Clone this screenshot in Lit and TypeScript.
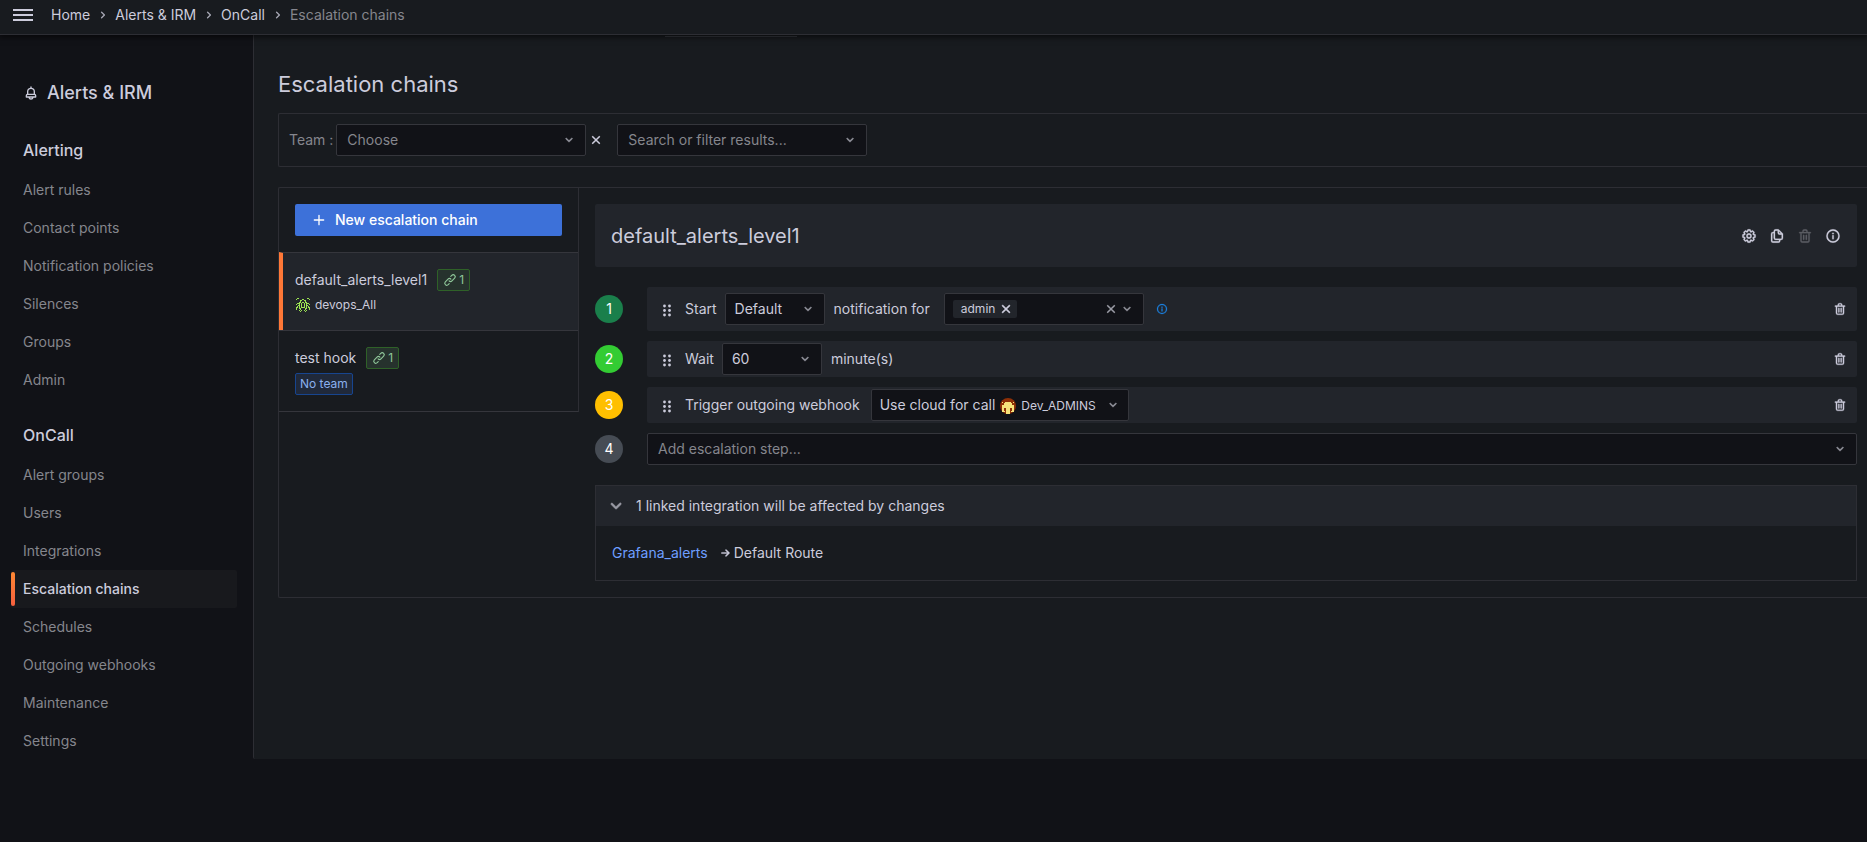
import { LitElement, html, css, svg, nothing } from "lit";
import { customElement, property } from "lit/decorators.js";
import { classMap } from "lit/directives/class-map.js";

const ICONS: Record<string, string> = {
  bell: "M18 13.2V10a6 6 0 0 0-5-5.9V3a1 1 0 0 0-2 0v1.1A6 6 0 0 0 6 10v3.2A3 3 0 0 0 4 16v2a1 1 0 0 0 1 1h3.1a4 4 0 0 0 7.8 0H19a1 1 0 0 0 1-1v-2a3 3 0 0 0-2-2.8zM8 10a4 4 0 0 1 8 0v3H8zm4 10a2 2 0 0 1-1.7-1h3.4a2 2 0 0 1-1.7 1zm6-3H6v-1a1 1 0 0 1 1-1h10a1 1 0 0 1 1 1z",
  down: "M17 9.2a1 1 0 0 0-1.4 0L12 12.7 8.5 9.2a1 1 0 0 0-1.4 1.4l4.2 4.2a1 1 0 0 0 1.4 0l4.3-4.2a1 1 0 0 0 0-1.4z",
  right: "M14.83 11.29 10.59 7.05a1 1 0 0 0-1.42 1.41L12.71 12l-3.54 3.54a1 1 0 1 0 1.42 1.41l4.24-4.24a1 1 0 0 0 0-1.42z",
  times: "M13.41 12l4.3-4.29a1 1 0 1 0-1.42-1.42L12 10.59l-4.29-4.3a1 1 0 0 0-1.42 1.42l4.3 4.29-4.3 4.29a1 1 0 1 0 1.42 1.42l4.29-4.3 4.29 4.3a1 1 0 1 0 1.42-1.42z",
  plus: "M19 11h-6V5a1 1 0 0 0-2 0v6H5a1 1 0 0 0 0 2h6v6a1 1 0 0 0 2 0v-6h6a1 1 0 0 0 0-2z",
  link: "M10 17.55l-1.77 1.72a2.47 2.47 0 0 1-3.5-3.5l4.54-4.55a2.46 2.46 0 0 1 3.39-.09l.12.1a1 1 0 0 0 1.4-1.43 2.75 2.75 0 0 0-.18-.21 4.46 4.46 0 0 0-6.09.22l-4.6 4.55a4.48 4.48 0 0 0 6.33 6.33L11.37 19A1 1 0 0 0 10 17.55zM20.69 3.31a4.49 4.49 0 0 0-6.33 0L12.63 5A1 1 0 0 0 14 6.45l1.73-1.72a2.47 2.47 0 0 1 3.5 3.5l-4.54 4.55a2.46 2.46 0 0 1-3.39.09l-.12-.1a1 1 0 0 0-1.4 1.43 2.75 2.75 0 0 0 .23.21 4.47 4.47 0 0 0 6.09-.22l4.55-4.55a4.49 4.49 0 0 0 .04-6.33z",
  trash: "M10 18a1 1 0 0 0 1-1v-6a1 1 0 0 0-2 0v6a1 1 0 0 0 1 1zM20 6h-4V5a3 3 0 0 0-3-3h-2a3 3 0 0 0-3 3v1H4a1 1 0 0 0 0 2h1v11a3 3 0 0 0 3 3h8a3 3 0 0 0 3-3V8h1a1 1 0 0 0 0-2zM10 5a1 1 0 0 1 1-1h2a1 1 0 0 1 1 1v1h-4zm7 14a1 1 0 0 1-1 1H8a1 1 0 0 1-1-1V8h10zm-3-1a1 1 0 0 0 1-1v-6a1 1 0 0 0-2 0v6a1 1 0 0 0 1 1z",
  info: "M12 2a10 10 0 1 0 10 10A10 10 0 0 0 12 2zm0 18a8 8 0 1 1 8-8 8 8 0 0 1-8 8zm0-9.5a1 1 0 0 0-1 1V16a1 1 0 0 0 2 0v-4.500a1 1 0 0 0-1-1zM12 7a1.25 1.25 0 1 0 1.25 1.25A1.25 1.25 0 0 0 12 7z",
  copy: "M21 8.94a1.31 1.31 0 0 0-.06-.27v-.09a1.07 1.07 0 0 0-.19-.28l-6-6a1.07 1.07 0 0 0-.28-.19.32.32 0 0 0-.09 0A.88.88 0 0 0 14.05 2H10a3 3 0 0 0-3 3v1H6a3 3 0 0 0-3 3v10a3 3 0 0 0 3 3h8a3 3 0 0 0 3-3v-1h1a3 3 0 0 0 3-3V8.94zM15 5.41 17.59 8H16a1 1 0 0 1-1-1zM15 19a1 1 0 0 1-1 1H6a1 1 0 0 1-1-1V9a1 1 0 0 1 1-1h1v7a3 3 0 0 0 3 3h5zm4-4a1 1 0 0 1-1 1h-8a1 1 0 0 1-1-1V5a1 1 0 0 1 1-1h3v3a3 3 0 0 0 3 3h3z",
  arrow: "M17.92 11.62a1 1 0 0 0-.21-.33l-5-5a1 1 0 0 0-1.42 1.42l3.3 3.29H5a1 1 0 0 0 0 2h9.590l-3.3 3.29a1 1 0 1 0 1.42 1.42l5-5a1 1 0 0 0 .21-1.09z",
  cog: "M21.32 9.55l-1.89-.63.89-1.78A1 1 0 0 0 20.13 6L18 3.87a1 1 0 0 0-1.15-.19l-1.78.89-.63-1.89A1 1 0 0 0 13.5 2h-3a1 1 0 0 0-.95.68l-.63 1.89-1.78-.89A1 1 0 0 0 6 3.87L3.87 6a1 1 0 0 0-.19 1.15l.89 1.78-1.89.63a1 1 0 0 0-.68.94v3a1 1 0 0 0 .68.95l1.89.63-.89 1.78A1 1 0 0 0 3.87 18L6 20.13a1 1 0 0 0 1.15.19l1.78-.89.63 1.89a1 1 0 0 0 .95.68h3a1 1 0 0 0 .95-.68l.63-1.89 1.78.89a1 1 0 0 0 1.13-.19L20.13 18a1 1 0 0 0 .19-1.15l-.89-1.78 1.89-.63a1 1 0 0 0 .68-.94v-3a1 1 0 0 0-.68-.95zM20 12.78l-1.2.4A2 2 0 0 0 17.64 16l.57 1.14-1.1 1.1L16 17.64a2 2 0 0 0-2.79 1.16l-.4 1.2h-1.59l-.4-1.2A2 2 0 0 0 8 17.64l-1.14.57-1.1-1.1L6.36 16a2 2 0 0 0-1.16-2.79L4 12.78v-1.56l1.2-.4A2 2 0 0 0 6.36 8l-.57-1.11 1.1-1.1L8 6.36a2 2 0 0 0 2.79-1.16l.4-1.2h1.59l.4 1.2A2 2 0 0 0 16 6.36l1.14-.57 1.1 1.1L17.64 8a2 2 0 0 0 1.16 2.79l1.2.4zM12 8a4 4 0 1 0 4 4 4 4 0 0 0-4-4zm0 6a2 2 0 1 1 2-2 2 2 0 0 1-2 2z",
};

const icon = (name: string, size = 16, weight = 0) => html`
  <svg width=${size} height=${size} viewBox="0 0 24 24" fill="currentColor" stroke="currentColor"
    stroke-width=${weight} aria-hidden="true">
    <path d=${ICONS[name]}></path>
  </svg>`;

const grip = html`
  <svg width="8" height="13" viewBox="0 0 8 13" fill="currentColor" aria-hidden="true">
    ${[2, 6.5, 11].map((y) => svg`<circle cx="1.5" cy=${y} r="1.4"></circle><circle cx="6.5" cy=${y} r="1.4"></circle>`)}
  </svg>`;

// Pixel rows of the generated team avatar; each mark is one filled cell.
const DEVOPS = [
  ".##........##.",
  "#.....##.....#",
  "....##..##....",
  "....#....#....",
  "...##.##.##...",
  ".###.#..#.###.",
  "#..#.#..#.#..#",
  "..##.#..#.##..",
  ".#.#.#..#.#.#.",
  "##.#.####.#.##",
  "#..##....##..#",
  "#...#....#...#",
  "...#.#..#.#...",
  "....#....#....",
];

const devopsAvatar = html`
  <svg width="14" height="14" viewBox="0 0 14 14" aria-hidden="true" shape-rendering="crispEdges">
    ${DEVOPS.flatMap((row, y) =>
      [...row].map((c, x) => (c === "#" ? svg`<rect x=${x} y=${y} width="1" height="1" fill="#9be352"></rect>` : nothing)),
    )}
  </svg>`;

const adminsAvatar = html`
  <svg width="16" height="16" viewBox="0 0 16 16" aria-hidden="true">
    <circle cx="8" cy="8" r="8" fill="#8f2f06"></circle>
    <path d="M5 4h6v1h1v2h2v7h-3v-1h1v-3h-2v6H6v-6H4v3h1v1H2V7h2V5h1z" fill="#f7e37a"></path>
    <path d="M2 4h1v1H2zM13 4h1v1h-1z" fill="#f7e37a"></path>
  </svg>`;

const base = css`
  * { box-sizing: border-box; }
  svg { display: block; flex: none; }
  a { color: inherit; text-decoration: none; }
  button, select, input { font: inherit; color: inherit; margin: 0; }
  button { background: none; border: 0; padding: 0; display: flex; align-items: center; cursor: pointer; }
`;

@customElement("select-box")
class SelectBox extends LitElement {
  @property() label = "";
  @property() value = "";
  @property({ type: Boolean }) placeholder = false;

  static styles = [base, css`
    :host { display: grid; align-items: center; color: #ccccdc; }
    select, .chevron { grid-area: 1 / 1; }
    select {
      appearance: none; width: 100%; height: 32px; padding: 0 28px 0 9px; border: 1px solid #35363c;
      border-radius: 2px; background: #111217;
    }
    .placeholder { color: #85868d; padding-left: 10px; }
    .chevron { justify-self: end; margin-right: 9px; color: #9a9ba5; pointer-events: none; }
  `];

  render() {
    return html`
      <select class=${classMap({ placeholder: this.placeholder })} aria-label=${this.label}>
        <option>${this.value}</option>
      </select>
      <span class="chevron">${icon("down", 16, 0.5)}</span>`;
  }
}

@customElement("side-nav")
class SideNav extends LitElement {
  static styles = [base, css`
    :host { display: block; padding: 35px 16px 0 11px; color: #85868d; }
    .title { display: flex; align-items: center; gap: 8px; margin: 0; padding: 9px 12px 7px;
      font-size: 18px; line-height: 28px; font-weight: 500; color: #ccccdc; }
    h3 { margin: 0; padding: 0 12px; font-size: 16px; line-height: 22px; font-weight: 500; color: #ccccdc; }
    section { padding-top: 25px; }
    ul { list-style: none; margin: 0; padding: 10px 0 0; }
    li a { display: flex; align-items: center; height: 38px; padding: 0 12px; }
    .active { display: grid; grid-template-columns: 4px 1fr; align-items: center; padding: 0;
      background: #18191d; border-radius: 2px; color: #ccccdc; font-weight: 500; }
    .active::before { content: ""; height: 34px; border-radius: 2px; background: linear-gradient(#ff8833, #f55f3e); }
    .active span { padding-left: 8px; }
  `];

  section(title: string, items: string[]) {
    return html`
      <section>
        <h3>${title}</h3>
        <ul>
          ${items.map((t) => html`<li>
            <a href="#" class=${classMap({ active: t === "Escalation chains" })}><span>${t}</span></a>
          </li>`)}
        </ul>
      </section>`;
  }

  render() {
    return html`
      <h2 class="title">${icon("bell")}Alerts &amp; IRM</h2>
      ${this.section("Alerting", ["Alert rules", "Contact points", "Notification policies", "Silences", "Groups", "Admin"])}
      ${this.section("OnCall", ["Alert groups", "Users", "Integrations", "Escalation chains", "Schedules",
        "Outgoing webhooks", "Maintenance", "Settings"])}`;
  }
}

@customElement("escalation-step")
class EscalationStep extends LitElement {
  @property() number = "";
  @property() tone = "";
  @property({ type: Boolean }) roomy = false;
  @property({ type: Boolean }) blank = false;

  static styles = [base, css`
    :host { display: grid; grid-template-columns: 28px 1fr; gap: 24px; align-items: center; }
    .badge { display: grid; place-items: center; height: 28px; border-radius: 50%; color: #fff; }
    .one { background: #1a7f4b; }
    .two { background: #33cc33; }
    .three { background: #ffbf00; }
    .four { background: #464c54; }
    .row { display: flex; align-items: center; gap: 8px; padding: 2px 10px 2px 16px; border-radius: 2px; background: #22252b; }
    .roomy { padding-top: 6px; padding-bottom: 6px; }
    .grip { margin-right: 6px; padding-top: 3px; cursor: grab; }
    .remove { margin-left: auto; }
  `];

  render() {
    return html`
      <span class="badge ${this.tone}">${this.number}</span>
      ${this.blank
        ? html`<slot></slot>`
        : html`<div class=${classMap({ row: true, roomy: this.roomy })}>
            <span class="grip">${grip}</span>
            <slot></slot>
            <button class="remove" aria-label="Delete step">${icon("trash", 14, 0.5)}</button>
          </div>`}`;
  }
}

@customElement("app-root")
class AppRoot extends LitElement {
  static styles = [base, css`
    :host { display: block; min-height: 100vh; overflow: hidden; background: #111217; color: #ccccdc;
      font-family: Inter, "Liberation Sans", sans-serif; font-size: 14px; line-height: 22px; }
    .topbar { position: relative; display: flex; align-items: center; gap: 18px; height: 35px; padding: 0 13px 5px;
      background: #181b1f; border-bottom: 1px solid #2d2e34; box-shadow: 0 1px 6px 1px #000000a0; }
    .topbar::after { content: ""; position: absolute; top: 36px; left: 665px; width: 132px; height: 1px; background: #222428; }
    .burger { flex-direction: column; gap: 3px; }
    .burger i { width: 20px; height: 2px; background: #ccccdc; }
    .crumbs { display: flex; align-items: center; gap: 4px; }
    .crumbs svg { margin-left: 1px; color: #a6a7b3; }
    .muted { color: #85868d; }
    .layout { display: grid; grid-template-columns: 253px 1fr; align-items: start; }
    main { min-height: 724px; padding: 33px 0 0 24px; background: #181b1f; border-left: 1px solid #2d2e34;
      border-bottom-left-radius: 2px; }
    h1 { margin: 0 0 13px; font-size: 22px; line-height: 32px; font-weight: 400; }
    .filters { display: flex; align-items: center; margin-bottom: 20px; padding: 10px; border: 1px solid #2d2e34;
      border-right: 0; border-radius: 2px 0 0 2px; }
    .filters select-box { width: 250px; }
    .filters .team-label { margin-right: 3px; color: #85868d; }
    .clear { margin: 0 13px 0 2px; }
    .panel { display: grid; grid-template-columns: 300px minmax(0, 1fr); align-items: start;
      border: 1px solid #2d2e34; border-right: 0; border-radius: 2px 0 0 2px; }
    .list { border-right: 1px solid #2d2e34; border-bottom: 1px solid #35363c; }
    .create { padding: 16px; }
    .create button { width: 100%; height: 32px; gap: 8px; padding: 0 16px; border-radius: 2px; background: #3d71d9;
      color: #fff; font-weight: 500; }
    .chain { display: grid; gap: 4px; padding: 16px; border-top: 1px solid #35363c; }
    .selected { padding-left: 12px; border-left: 4px solid #ff7837; background: #22252b; }
    .name { display: flex; align-items: center; gap: 10px; }
    .count, .noteam { display: flex; align-items: center; height: 22px; border-radius: 2px; font-size: 12px; }
    .count { gap: 2px; padding: 0 5px; border: 1px solid #2f6128; background: #26322d; color: #8fc79a; }
    .noteam { justify-self: start; padding: 0 4px; border: 1px solid #17458f; background: #20293a; color: #8ab0ee; }
    .team { display: flex; align-items: center; gap: 5px; padding-left: 1px; font-size: 12px; line-height: 19px; }
    .detail { padding: 16px 10px 16px 16px; }
    .head { display: flex; align-items: center; justify-content: space-between; height: 63px; margin-bottom: 20px;
      padding: 0 16px; border-radius: 2px; background: #22252b; }
    h2 { margin: 0; font-size: 20px; line-height: 24px; font-weight: 400; }
    .actions { display: flex; gap: 12px; }
    .actions button:disabled { color: #5a5c63; }
    .steps { display: grid; gap: 10px; margin-bottom: 20px; }
    .short { width: 100px; }
    .gap { margin: 0 6px 0 1px; }
    .combo { display: flex; align-items: center; height: 32px; border: 1px solid #35363c; border-radius: 2px;
      background: #111217; }
    .users { width: 200px; margin-right: 4px; padding: 0 8px; }
    .users input { flex: 1; min-width: 0; border: 0; padding: 0; background: none; outline: 0; }
    .chip { display: flex; align-items: center; gap: 3px; height: 18px; padding: 0 3px 0 8px; border-radius: 2px;
      background: #22252b; font-size: 12px; }
    .grey { color: #9a9ba5; }
    .blue { color: #1c85e8; }
    .hook { gap: 5px; margin-left: 3px; padding: 0 7px 0 8px; }
    .hook svg { margin-top: 2px; }
    .hook small { margin-right: 4px; padding-top: 1px; font-size: 12px; }
    .hook .grey svg { margin-top: 0; }
    .linked { border: 1px solid #2d2e34; }
    .linked header { display: flex; align-items: center; gap: 8px; height: 40px; padding: 0 8px; background: #22252b; }
    .route { display: flex; align-items: center; gap: 11px; padding: 16px; }
    .route span { display: flex; align-items: center; gap: 1px; }
    .route a { color: #6e9fff; }
  `];

  render() {
    return html`
      <nav class="topbar" aria-label="Breadcrumbs">
        <button class="burger" aria-label="Open menu"><i></i><i></i><i></i></button>
        <div class="crumbs">
          <a href="#">Home</a>${icon("right")}
          <a href="#">Alerts &amp; IRM</a>${icon("right")}
          <a href="#">OnCall</a>${icon("right")}
          <span class="muted">Escalation chains</span>
        </div>
      </nav>
      <div class="layout">
        <side-nav></side-nav>
        <main>
          <h1>Escalation chains</h1>
          <div class="filters">
            <span class="team-label">Team :</span>
            <select-box label="Team" value="Choose" placeholder></select-box>
            <button class="clear" aria-label="Clear team">${icon("times", 16, 0.3)}</button>
            <select-box label="Filter" value="Search or filter results..." placeholder></select-box>
          </div>
          <div class="panel">
            <div class="list">
              <div class="create"><button>${icon("plus")}New escalation chain</button></div>
              <div class="chain selected">
                <div class="name">default_alerts_level1<span class="count">${icon("link", 14)}1</span></div>
                <div class="team">${devopsAvatar}devops_All</div>
              </div>
              <div class="chain">
                <div class="name">test hook<span class="count">${icon("link", 14)}1</span></div>
                <span class="noteam">No team</span>
              </div>
            </div>
            <div class="detail">
              <div class="head">
                <h2>default_alerts_level1</h2>
                <div class="actions">
                  <button aria-label="Edit">${icon("cog", 16, 0.4)}</button>
                  <button aria-label="Copy">${icon("copy", 16, 0.4)}</button>
                  <button aria-label="Delete" disabled>${icon("trash", 16, 0.4)}</button>
                  <button aria-label="Details">${icon("info", 16, 0.4)}</button>
                </div>
              </div>
              <div class="steps">
                <escalation-step number="1" tone="one" roomy>
                  <span>Start</span>
                  <select-box class="short" label="Importance" value="Default"></select-box>
                  <span class="gap">notification for</span>
                  <div class="combo users">
                    <span class="chip">admin<button aria-label="Remove admin">${icon("times", 16, 0.6)}</button></span>
                    <input aria-label="Users" />
                    <button class="grey" aria-label="Clear users">${icon("times", 16, 0.3)}</button>
                    <span class="grey">${icon("down", 16, 0.5)}</span>
                  </div>
                  <span class="blue">${icon("info", 12, 0.4)}</span>
                </escalation-step>
                <escalation-step number="2" tone="two">
                  <span>Wait</span>
                  <select-box class="short" label="Minutes" value="60"></select-box>
                  <span class="gap">minute(s)</span>
                </escalation-step>
                <escalation-step number="3" tone="three">
                  <span>Trigger outgoing webhook</span>
                  <button class="combo hook" aria-haspopup="listbox">
                    Use cloud for call ${adminsAvatar}<small>Dev_ADMINS</small><span class="grey">${icon("down", 16, 0.5)}</span>
                  </button>
                </escalation-step>
                <escalation-step number="4" tone="four" blank>
                  <select-box label="Add step" value="Add escalation step..." placeholder></select-box>
                </escalation-step>
              </div>
              <section class="linked">
                <header><button class="grey" aria-label="Collapse">${icon("down", 24, 0.5)}</button>1 linked integration will be affected by changes</header>
                <div class="route"><a href="#">Grafana_alerts</a><span>${icon("arrow", 14, 0.7)}Default Route</span></div>
              </section>
            </div>
          </div>
        </main>
      </div>`;
  }
}
